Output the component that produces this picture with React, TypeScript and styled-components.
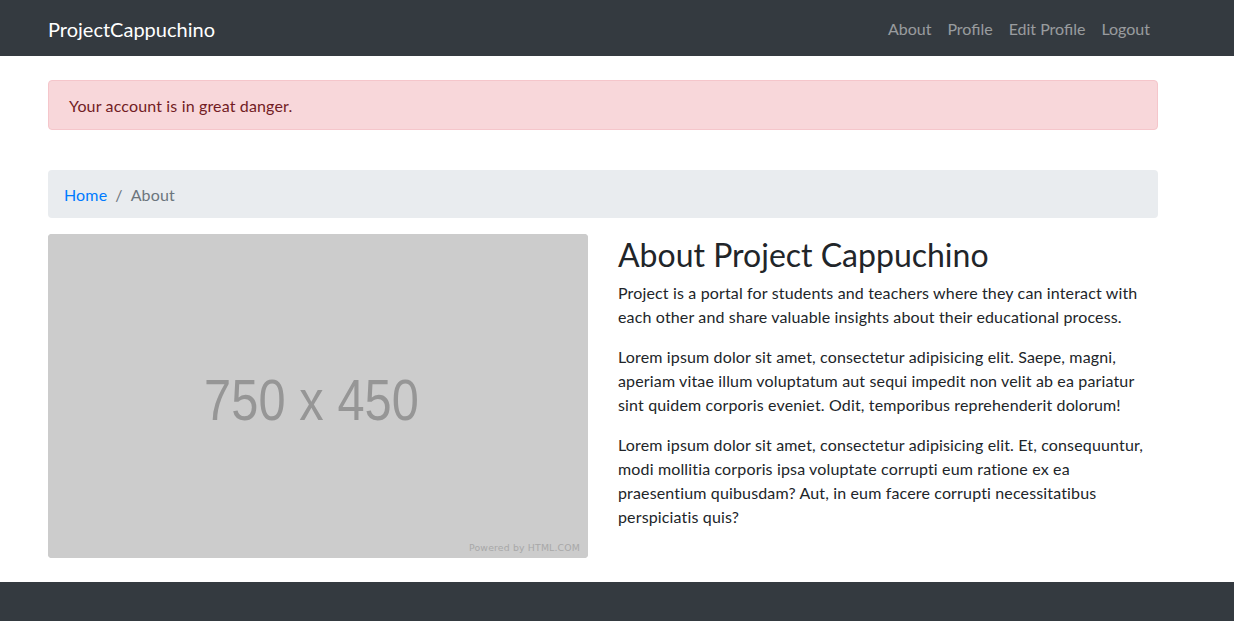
import React from "react";
import styled, { createGlobalStyle } from "styled-components";

const Global = createGlobalStyle`
  html, body { margin: 0; padding: 0; }
  body {
    font-family: Lato, "Noto Sans", "Liberation Sans", sans-serif;
    font-size: 16px;
    line-height: 1.5;
    letter-spacing: 0.15px;
    color: #212529;
    background: #fff;
  }
  * { box-sizing: border-box; }
`;

const Navbar = styled.nav`
  height: 56px;
  background: #343a40;
  display: flex;
  align-items: center;
  padding-top: 2px;
`;

const Container = styled.div`
  width: 1110px;
  margin-left: 48px;
`;

const NavInner = styled(Container)`
  display: flex;
  align-items: center;
  justify-content: space-between;
`;

const Brand = styled.a`
  color: #fff;
  font-size: 20px;
  line-height: 30px;
  letter-spacing: 0;
  text-decoration: none;
`;

const NavList = styled.ul`
  display: flex;
  list-style: none;
  margin: 0;
  padding: 0;
`;

const NavLink = styled.a`
  display: block;
  padding: 8px;
  color: rgba(255, 255, 255, 0.5);
  text-decoration: none;
  font-size: 16px;
  line-height: 24px;
  letter-spacing: 0;
`;

const Main = styled(Container)`
  padding-top: 24px;
  padding-bottom: 24px;
`;

const Alert = styled.div`
  padding: 13px 20px 11px;
  background: #f8d7da;
  border: 1px solid #f5c6cb;
  color: #721c24;
  border-radius: 4px;
  margin-bottom: 40px;
`;

const Breadcrumb = styled.ol`
  display: flex;
  list-style: none;
  margin: 0 0 16px;
  padding: 13px 16px 11px;
  background: #e9ecef;
  border-radius: 4px;
`;

const Crumb = styled.li<{ $active?: boolean }>`
  color: ${(p) => (p.$active ? "#6c757d" : "#007bff")};
  &:not(:first-child)::before {
    content: "/";
    color: #6c757d;
    padding: 0 8px;
  }
`;

const CrumbLink = styled.a`
  color: #007bff;
  text-decoration: none;
`;

const Row = styled.div`
  display: grid;
  grid-template-columns: 540px 540px;
  column-gap: 30px;
`;

const Placeholder = styled.div`
  width: 540px;
  height: 324px;
  border-radius: 4px;
  overflow: hidden;
  background: #ccc;
  & > svg { display: block; }
`;

const TextCol = styled.div`
  padding-top: 2px;
`;

const Heading = styled.h2`
  font-size: 32px;
  font-weight: 400;
  line-height: 1.2;
  letter-spacing: 0;
  margin: 0 0 7px;
`;

const Para = styled.p`
  margin: 0 0 16px;
`;

const Footer = styled.footer`
  height: 39px;
  background: #343a40;
`;

export default function App() {
  return (
    <>
      <Global />
      <Navbar>
        <NavInner>
          <Brand href="#">ProjectCappuchino</Brand>
          <NavList>
            <li><NavLink href="#">About</NavLink></li>
            <li><NavLink href="#">Profile</NavLink></li>
            <li><NavLink href="#">Edit Profile</NavLink></li>
            <li><NavLink href="#">Logout</NavLink></li>
          </NavList>
        </NavInner>
      </Navbar>
      <Main>
        <Alert>Your account is in great danger.</Alert>
        <Breadcrumb>
          <Crumb><CrumbLink href="#">Home</CrumbLink></Crumb>
          <Crumb $active>About</Crumb>
        </Breadcrumb>
        <Row>
          <Placeholder>
            <svg width="540" height="324" viewBox="0 0 540 324">
              <rect width="540" height="324" fill="#cccccc" />
              <text
                x="156"
                y="186"
                fill="#969696"
                fontFamily="'Liberation Sans', Arial, sans-serif"
                fontSize="58"
                textLength="215"
                lengthAdjust="spacingAndGlyphs"
              >
                750 x 450
              </text>
              <text
                x="421"
                y="317"
                fill="#a8a8a8"
                fontFamily="'DejaVu Sans', sans-serif"
                fontSize="9"
                textLength="111"
                lengthAdjust="spacingAndGlyphs"
              >
                Powered by HTML.COM
              </text>
            </svg>
          </Placeholder>
          <TextCol>
            <Heading>About Project Cappuchino</Heading>
            <Para>
              Project is a portal for students and teachers where they can interact with each other and share valuable insights about their educational process.
            </Para>
            <Para>
              Lorem ipsum dolor sit amet, consectetur adipisicing elit. Saepe, magni, aperiam vitae illum voluptatum aut sequi impedit non velit ab ea pariatur sint quidem corporis eveniet. Odit, temporibus reprehenderit dolorum!
            </Para>
            <Para>
              Lorem ipsum dolor sit amet, consectetur adipisicing elit. Et, consequuntur, modi mollitia corporis ipsa voluptate corrupti eum ratione ex ea praesentium quibusdam? Aut, in eum facere corrupti necessitatibus perspiciatis quis?
            </Para>
          </TextCol>
        </Row>
      </Main>
      <Footer />
    </>
  );
}
